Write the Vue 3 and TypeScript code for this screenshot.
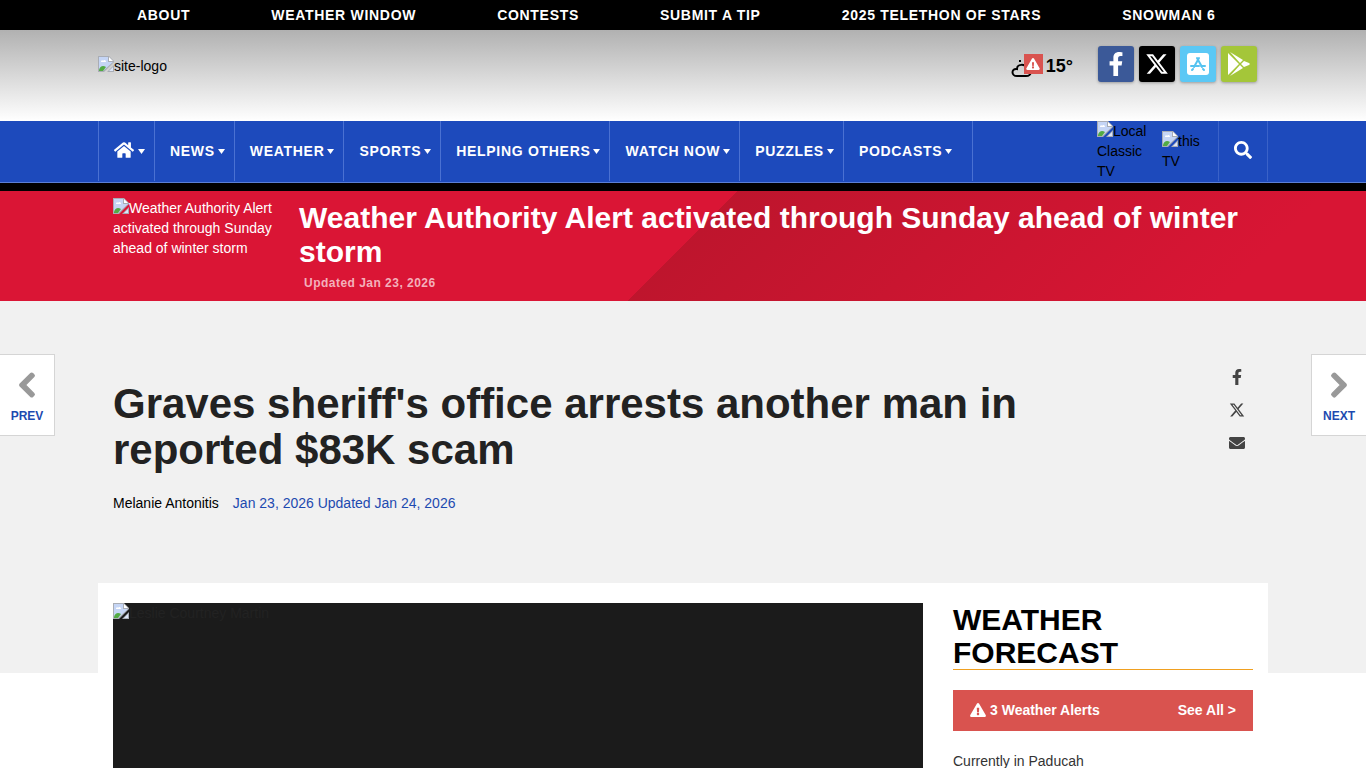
<script setup lang="ts">
import { h, type FunctionalComponent } from 'vue'

interface NavItem {
  label: string
  icon?: boolean
}

const topLinks: string[] = ['About', 'Weather Window', 'Contests', 'Submit a Tip', '2025 Telethon of Stars', 'Snowman 6']

const sections: NavItem[] = [
  { label: 'Home', icon: true },
  { label: 'News' },
  { label: 'Weather' },
  { label: 'Sports' },
  { label: 'Helping Others' },
  { label: 'Watch Now' },
  { label: 'Puzzles' },
  { label: 'Podcasts' },
]

const glyphs: Record<string, { box: string; d: string }> = {
  facebook: {
    box: '0 0 320 512',
    d: 'M279.14 288l14.22-92.66h-88.91v-60.13c0-25.35 12.42-50.06 52.24-50.06h40.42V6.26S260.43 0 225.36 0c-73.22 0-121.08 44.38-121.08 124.72v70.62H22.89V288h81.39v224h100.17V288z',
  },
  x: {
    box: '0 0 512 512',
    d: 'M389.2 48h70.6L305.6 224.2 487 464H345L233.7 318.6 106.5 464H35.8L200.7 275.5 26.8 48H172.4L272.9 180.9 389.2 48zM364.4 421.8h39.1L151.1 88h-42L364.4 421.8z',
  },
  home: {
    box: '0 0 576 512',
    d: 'M280.37 148.26L96 300.11V464a16 16 0 0 0 16 16l112.06-.29a16 16 0 0 0 15.92-16V368a16 16 0 0 1 16-16h64a16 16 0 0 1 16 16v95.64a16 16 0 0 0 16 16.05L464 480a16 16 0 0 0 16-16V300L295.67 148.26a12.19 12.19 0 0 0-15.3 0zM571.6 251.47L488 182.56V44.05a12 12 0 0 0-12-12h-56a12 12 0 0 0-12 12v72.61L318.47 43a48 48 0 0 0-61 0L4.34 251.47a12 12 0 0 0-1.6 16.9l25.5 31A12 12 0 0 0 45.15 301l235.22-193.74a12.19 12.19 0 0 1 15.3 0L530.9 301a12 12 0 0 0 16.9-1.6l25.5-31a12 12 0 0 0-1.7-16.93z',
  },
  search: {
    box: '0 0 512 512',
    d: 'M505 442.7L405.3 343c-4.5-4.5-10.6-7-17-7H372c27.6-35.3 44-79.7 44-128C416 93.1 322.9 0 208 0S0 93.1 0 208s93.1 208 208 208c48.3 0 92.7-16.4 128-44v16.3c0 6.4 2.5 12.5 7 17l99.7 99.7c9.4 9.4 24.6 9.4 33.9 0l28.3-28.3c9.4-9.4 9.4-24.6.1-34zM208 336c-70.7 0-128-57.2-128-128 0-70.7 57.2-128 128-128 70.7 0 128 57.2 128 128 0 70.7-57.2 128-128 128z',
  },
  envelope: {
    box: '0 0 512 512',
    d: 'M502.3 190.8c3.9-3.1 9.7-.2 9.7 4.7V400c0 26.5-21.5 48-48 48H48c-26.5 0-48-21.5-48-48V195.6c0-5 5.7-7.8 9.7-4.7 22.4 17.4 52.1 39.5 154.1 113.6 21.1 15.4 56.7 47.8 92.2 47.6 35.7.3 72-32.8 92.3-47.6 102-74.1 131.6-96.3 154-113.7zM256 320c23.2.4 56.6-29.2 73.4-41.4 132.7-96.3 142.8-104.7 173.4-128.7 5.8-4.5 9.2-11.5 9.2-18.9v-19c0-26.5-21.5-48-48-48H48c-26.5 0-48 21.5-48 48v19c0 7.4 3.4 14.3 9.2 18.9 30.6 23.9 40.7 32.4 173.4 128.7 16.8 12.2 50.2 41.8 73.4 41.4z',
  },
  warning: {
    box: '0 0 576 512',
    d: 'M569.517 440.013C587.975 472.007 564.806 512 527.94 512H48.054c-36.937 0-59.999-40.055-41.577-71.987L246.423 23.985c18.467-32.009 64.72-31.951 83.154 0l239.94 416.028zM288 354c-25.405 0-46 20.595-46 46s20.595 46 46 46 46-20.595 46-46-20.595-46-46-46zm-43.673-165.346l7.418 136c.347 6.364 5.609 11.346 11.982 11.346h48.546c6.373 0 11.635-4.982 11.982-11.346l7.418-136c.375-6.874-5.098-12.654-11.982-12.654h-63.383c-6.884 0-12.356 5.78-11.981 12.654z',
  },
  prev: {
    box: '0 0 320 512',
    d: 'M34.52 239.03L228.87 44.69c9.37-9.37 24.57-9.37 33.94 0l22.67 22.67c9.36 9.36 9.37 24.52.04 33.9L131.49 256l154.02 154.75c9.34 9.38 9.32 24.54-.04 33.9l-22.67 22.67c-9.37 9.37-24.57 9.37-33.94 0L34.52 272.97c-9.37-9.37-9.37-24.57 0-33.94z',
  },
  next: {
    box: '0 0 320 512',
    d: 'M285.48 272.97L91.13 467.31c-9.37 9.37-24.57 9.37-33.94 0l-22.67-22.67c-9.36-9.36-9.37-24.52-.04-33.9L188.51 256 34.49 101.25c-9.34-9.38-9.32-24.54.04-33.9l22.67-22.67c9.37-9.37 24.57-9.37 33.94 0L285.48 239.03c9.37 9.37 9.37 24.57 0 33.94z',
  },
}

const Glyph: FunctionalComponent<{ name: string }> = (props) =>
  h('svg', { viewBox: glyphs[props.name].box, fill: 'currentColor', 'aria-hidden': 'true' }, [
    h('path', { d: glyphs[props.name].d }),
  ])
Glyph.props = ['name']

// Placeholder drawn in front of the text of an unavailable picture
const Missing: FunctionalComponent = () =>
  h('svg', { viewBox: '0 0 16 16', width: 16, height: 16, 'aria-hidden': 'true' }, [
    h('path', { d: 'M0 0h11l5 5v1L6 16H0z', fill: '#a9adb5' }),
    h('path', { d: 'M1 1h9v5h5L5 15H1z', fill: '#c5d5f5' }),
    h('path', { d: 'M1 14c1-4 4-5 7-3L5 15H1z', fill: '#53ab44' }),
    h('path', { d: 'M3 6c0-2 2-2 2-1 1-2 3-1 3 1z', fill: '#fff' }),
    h('path', { d: 'M11 1v4h4z', fill: '#fff' }),
    h('path', { d: 'M16 9v7H9z', fill: '#a9adb5' }),
    h('path', { d: 'M15 11v4h-4z', fill: '#dce6fa' }),
  ])
</script>

<template>
  <div class="page">
    <nav class="topbar" aria-label="Quick links">
      <ul class="wrap top-list">
        <li v-for="link in topLinks" :key="link"><a href="#">{{ link }}</a></li>
      </ul>
    </nav>

    <header class="masthead">
      <div class="wrap mast-row">
        <a href="#" class="logo"><Missing class="missing" />site-logo</a>
        <div class="mast-tools">
          <a href="#" class="conditions" aria-label="Weather conditions">
            <span class="sky">
              <svg class="cloud" viewBox="0 0 22 18" fill="none" stroke="#000" stroke-width="2" aria-hidden="true">
                <path d="M6 17h9c6 0 6-7 1-7C14 4 6 5 6 10 0 9 0 17 6 17z" />
                <path d="M9 1v2" />
              </svg>
              <span class="badge"><Glyph name="warning" class="badge-icon" /></span>
            </span>
            <span class="temp">15°</span>
          </a>
          <div class="social">
            <a href="#" class="tile facebook" aria-label="Facebook"><Glyph name="facebook" class="tile-icon" /></a>
            <a href="#" class="tile twitter" aria-label="X"><Glyph name="x" class="tile-icon" /></a>
            <a href="#" class="tile ios" aria-label="iOS app">
              <svg class="tile-icon" viewBox="0 0 24 24" aria-hidden="true">
                <rect x="1" y="1" width="22" height="22" rx="3" fill="#fff" />
                <path d="M13 6L8 15M11 6l5 9M5 14h8M15 14h4M7 17l-1 1M17 17l1 1" fill="none" stroke="#55c3f0" stroke-width="2" stroke-linecap="round" />
              </svg>
            </a>
            <a href="#" class="tile android" aria-label="Android app">
              <svg class="tile-icon" viewBox="0 0 24 24" fill="#fff" aria-hidden="true">
                <path d="M1 1v22l11-11zM3 0l10 11 3-3zM3 24l10-11 3 3zM17 9l-3 3 3 3 5-2c1-1 1-1 0-2z" />
              </svg>
            </a>
          </div>
        </div>
      </div>
    </header>

    <nav class="mainbar" aria-label="Sections">
      <div class="wrap main-row">
        <ul class="sections">
          <li v-for="item in sections" :key="item.label">
            <a href="#" :aria-label="item.label">
              <Glyph v-if="item.icon" name="home" class="home-icon" />
              <span v-else>{{ item.label }}</span>
              <svg class="caret" viewBox="0 0 7 5" fill="currentColor" aria-hidden="true"><path d="M0 0h7L3.5 5z" /></svg>
            </a>
          </li>
        </ul>
        <div class="partners">
          <a href="#" class="partner local"><Missing class="missing" />Local Classic TV</a>
          <a href="#" class="partner this"><Missing class="missing" />this TV</a>
          <button type="button" class="search" aria-label="Search"><Glyph name="search" class="search-icon" /></button>
        </div>
      </div>
    </nav>

    <section class="breaking">
      <div class="wrap breaking-row">
        <a href="#" class="thumb"><Missing class="missing" />Weather Authority Alert activated through Sunday ahead of winter storm</a>
        <div class="breaking-copy">
          <h2><a href="#">Weather Authority Alert activated through Sunday ahead of winter storm</a></h2>
          <p>Updated Jan 23, 2026</p>
        </div>
      </div>
    </section>

    <main>
      <div class="hero">
        <div class="wrap hero-row">
          <div class="hero-copy">
            <h1>Graves sheriff's office arrests another man in reported $83K scam</h1>
            <p class="byline">
              <span>Melanie Antonitis</span>
              <span class="dates">Jan 23, 2026 Updated Jan 24, 2026</span>
            </p>
          </div>
          <div class="share">
            <a href="#" aria-label="Share on Facebook"><Glyph name="facebook" class="share-icon" /></a>
            <a href="#" aria-label="Share on X"><Glyph name="x" class="share-icon" /></a>
            <a href="#" aria-label="Share by email"><Glyph name="envelope" class="share-icon" /></a>
          </div>
        </div>
      </div>

      <div class="wrap panel">
        <figure class="photo"><Missing class="missing" />Leslie Courtney Martin</figure>
        <aside class="forecast">
          <h3>Weather Forecast</h3>
          <a href="#" class="alerts">
            <Glyph name="warning" class="alert-icon" />
            <span>3 Weather Alerts</span>
            <span class="see-all">See All &gt;</span>
          </a>
          <p>Currently in Paducah</p>
        </aside>
      </div>
    </main>

    <a href="#" class="pager pager-prev"><Glyph name="prev" class="pager-icon" />Prev</a>
    <a href="#" class="pager pager-next"><Glyph name="next" class="pager-icon" />Next</a>
  </div>
</template>

<style>
body {
  margin: 0;
  background: #fff;
}
</style>

<style scoped>
* {
  box-sizing: border-box;
}
.page {
  position: relative;
  height: 100vh;
  overflow: hidden;
  font-family: "Liberation Sans", Arial, sans-serif;
  font-size: 14px;
  line-height: 20px;
  color: #000;
}
a {
  color: inherit;
  text-decoration: none;
}
ul, p, h1, h2, h3, figure {
  margin: 0;
  padding: 0;
  list-style: none;
}
.wrap {
  width: 100%;
  max-width: 1170px;
  margin: 0 auto;
}
.missing {
  display: inline-block;
  vertical-align: bottom;
  margin-bottom: 4px;
}
.topbar {
  background: #000;
  color: #fff;
}
.top-list {
  display: flex;
  height: 30px;
  align-items: center;
  font-weight: bold;
  letter-spacing: 0.05em;
  text-transform: uppercase;
}
.top-list a {
  display: block;
  padding: 0 42px 0 39px;
  white-space: nowrap;
}
.masthead {
  background: linear-gradient(#b1b1b1, #fff);
}
.mast-row {
  display: flex;
  justify-content: space-between;
  height: 91px;
  padding: 16px 11px 0 0;
}
.logo {
  padding-top: 10px;
}
.mast-tools {
  display: flex;
  gap: 25px;
}
.conditions {
  display: flex;
  align-items: center;
  height: 40px;
  gap: 3px;
}
.sky {
  position: relative;
  width: 32px;
  height: 24px;
}
.cloud {
  position: absolute;
  left: 0;
  top: 5px;
  width: 22px;
  height: 18px;
}
.badge {
  position: absolute;
  right: 0;
  top: 0;
  display: flex;
  align-items: center;
  justify-content: center;
  width: 19px;
  height: 20px;
  background: #d9534f;
  color: #fff;
}
.badge-icon {
  width: 14px;
  height: 12px;
}
.temp {
  font-size: 18px;
  font-weight: bold;
}
.social {
  display: flex;
  gap: 5px;
}
.tile {
  display: flex;
  align-items: center;
  justify-content: center;
  width: 36px;
  height: 36px;
  border-radius: 3px;
  color: #fff;
  box-shadow: 0 1px 3px rgba(0, 0, 0, 0.3);
}
.tile-icon {
  width: 24px;
  height: 24px;
}
.facebook {
  background: #3b5998;
}
.twitter {
  background: #000;
}
.ios {
  background: #5bc8f5;
}
.android {
  background: #a4c639;
}
.mainbar {
  background: #1d4abc;
  border-bottom: 8px solid #000;
  box-shadow: inset 0 -1px #5b7fd4;
  color: #fff;
}
.main-row {
  display: flex;
  justify-content: space-between;
  height: 62px;
}
.sections {
  display: flex;
  height: 60px;
  font-weight: bold;
  letter-spacing: 0.05em;
  text-transform: uppercase;
}
.sections li {
  border-left: 1px solid #4a71d2;
}
.sections li:last-child {
  padding-right: 11px;
  border-right: 1px solid #4a71d2;
}
.sections a {
  display: flex;
  align-items: center;
  height: 60px;
  gap: 3px;
  padding: 0 9px 0 15px;
  white-space: nowrap;
}
.home-icon {
  width: 20px;
  height: 18px;
  margin: 0 1px 2px 0;
}
.caret {
  width: 7px;
  height: 5px;
}
.partners {
  display: flex;
  color: #000;
}
.partner {
  width: 56px;
}
.this {
  width: 48px;
  margin-left: 9px;
  padding-top: 10px;
}
.search {
  display: flex;
  align-items: center;
  justify-content: center;
  width: 50px;
  height: 60px;
  margin-left: 8px;
  padding: 0 0 2px;
  border: 0 solid #3a62c8;
  border-width: 0 1px;
  background: none;
  color: #fff;
}
.search-icon {
  width: 18px;
  height: 18px;
}
.breaking {
  background: linear-gradient(135deg, #da1535 50%, #be152d 50%, #d81534 90%);
  color: #fff;
}
.breaking-row {
  display: flex;
  gap: 16px;
  padding: 7px 15px 8px;
}
.thumb {
  flex: 0 0 170px;
  padding-right: 8px;
}
.breaking-copy h2 {
  padding-top: 3px;
  font-size: 30px;
  line-height: 34px;
}
.breaking-copy p {
  padding: 4px 5px 0;
  font-size: 12px;
  font-weight: bold;
  letter-spacing: 0.04em;
  color: #f3b0bb;
}
.hero {
  padding: 66px 0 160px;
  background: #f1f1f1;
}
.hero-row {
  display: flex;
  justify-content: space-between;
  padding: 0 15px;
}
.hero-copy {
  flex: 0 1 960px;
  padding-top: 14px;
}
h1 {
  font-size: 42px;
  line-height: 46px;
  color: #222;
}
.byline {
  display: flex;
  gap: 14px;
  padding-top: 20px;
}
.dates {
  color: #1d4ab0;
}
.share {
  display: flex;
  flex-direction: column;
  gap: 13px;
  padding-right: 8px;
  color: #444;
}
.share a {
  display: flex;
  height: 20px;
  align-items: center;
}
.share-icon {
  width: 16px;
  height: 16px;
}
.panel {
  position: relative;
  display: flex;
  gap: 30px;
  margin-top: -90px;
  padding: 20px 15px;
  background: #fff;
}
.photo {
  flex: 1 1 0;
  height: 456px;
  background: #1b1b1b;
  color: #222;
}
.forecast {
  flex: 0 0 300px;
  color: #333;
}
h3 {
  border-bottom: 1px solid #f0a020;
  font-size: 30px;
  line-height: 33px;
  text-transform: uppercase;
  color: #000;
}
.alerts {
  display: flex;
  align-items: center;
  gap: 4px;
  margin: 20px 0;
  padding: 10px 17px 11px;
  background: #d9534f;
  color: #fff;
  font-weight: bold;
}
.alert-icon {
  width: 16px;
  height: 14px;
}
.see-all {
  margin-left: auto;
}
.pager {
  position: absolute;
  top: 354px;
  display: flex;
  flex-direction: column;
  align-items: center;
  gap: 7px;
  width: 55px;
  padding: 16px 0 9px;
  border: 1px solid #d5d5d5;
  background: #fff;
  color: #1d4ab0;
  font-size: 12px;
  font-weight: bold;
  text-transform: uppercase;
}
.pager-prev {
  left: 0;
  border-left: 0;
}
.pager-next {
  right: 0;
  border-right: 0;
}
.pager-icon {
  width: 28px;
  height: 28px;
  overflow: visible;
  color: #999;
  stroke: currentColor;
  stroke-width: 24px;
}
</style>
